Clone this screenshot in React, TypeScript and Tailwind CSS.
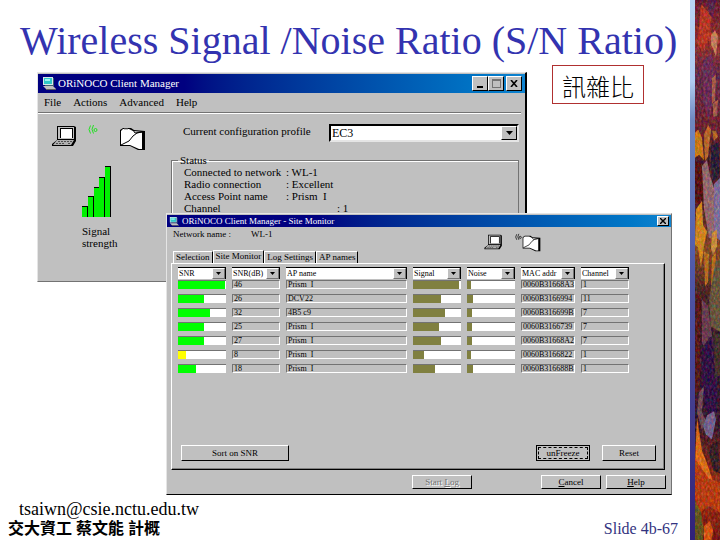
import type { ReactNode } from "react";
import clsx from "clsx";

const MENU_ITEMS = ["File", "Actions", "Advanced", "Help"];

const STATUS_ROWS = [
  { label: "Connected to network", value: "WL-1" },
  { label: "Radio connection", value: "Excellent" },
  { label: "Access Point name", value: "Prism  I" },
];

const TABS = ["Selection", "Site Monitor", "Log Settings", "AP names"];

const COLUMNS = [
  { id: "snr", title: "SNR", className: "w-12" },
  { id: "snrDb", title: "SNR(dB)", className: "w-12" },
  { id: "apName", title: "AP name", className: "" },
  { id: "signal", title: "Signal", className: "w-12" },
  { id: "noise", title: "Noise", className: "w-12" },
  { id: "mac", title: "MAC addr", className: "w-[54px]" },
  { id: "channel", title: "Channel", className: "w-12" },
];

const STATIONS = [
  { snr: 98, db: "46", name: "Prism  I", signal: 96, noise: 8, mac: "0060B31668A3", channel: "1" },
  { snr: 54, db: "26", name: "DCV22", signal: 58, noise: 12, mac: "0060B3166994", channel: "11" },
  { snr: 67, db: "32", name: "4B5 c9", signal: 67, noise: 10, mac: "0060B316699B", channel: "7" },
  { snr: 54, db: "25", name: "Prism  I", signal: 54, noise: 10, mac: "0060B3166739", channel: "7" },
  { snr: 54, db: "27", name: "Prism  I", signal: 58, noise: 10, mac: "0060B31668A2", channel: "7" },
  { snr: 16, db: "8", name: "Prism  I", signal: 22, noise: 8, mac: "0060B3166822", channel: "1" },
  { snr: 37, db: "18", name: "Prism  I", signal: 46, noise: 12, mac: "0060B316688B", channel: "1" },
];

function ComputerIcon({ className }: { className: string }) {
  return (
    <svg viewBox="0 0 14 13" className={className} aria-hidden="true">
      <path d="M1 0h10v8H1z" fill="#d8e8e8" />
      <path d="M2 1h8v6H2z" fill="#30c8c8" />
      <path d="M3 2h5v2H3z" fill="#a0f0f0" />
      <path d="M11 1h1v8H3V8h8z" fill="#406070" />
      <path d="M1 9h10l3 3H4z" fill="#c0c0c0" />
      <path d="M4 12h10v1H4z" fill="#606060" />
    </svg>
  );
}

function LaptopIcon({ className }: { className: string }) {
  return (
    <svg viewBox="0 0 25 22" className={className} aria-hidden="true">
      <path d="M5 1h17l2 1v14l-3 5H0v-2l5-4z" fill="#000" />
      <path d="M6 2h16v12H6z" fill="#c0c0c0" />
      <path d="M8 3h13v10H8z" fill="#000" />
      <path d="M9 4h11v9H9z" fill="#fff" />
      <path d="M5 15h17l-3 5H1z" fill="#b0b0b0" />
      <path d="M6 16.500h14M4 18.500h9M16 18.500h2" stroke="#505050" strokeDasharray="2 1" />
    </svg>
  );
}

function WavesIcon({ className }: { className: string }) {
  return (
    <svg viewBox="0 0 10 9" className={className} fill="none" stroke="currentColor" aria-hidden="true">
      <path d="M2.500.5q-3 4 0 8M5.500 0q-3 4.500 0 8.500" />
      <circle cx="7.500" cy="5" r="1.500" />
    </svg>
  );
}

function FolderIcon({ className }: { className: string }) {
  return (
    <svg viewBox="0 0 25 24" className={className} aria-hidden="true">
      <path d="M0 3l3-2h8l3 2 11 1v19h-7l-8-4H0z" fill="#000" />
      <path d="M1 4l2-2h6l4 2 9 1v17h-3l-9-4H1z" fill="#fff" />
      <path d="M1 18l8-4 4-5 4-3 5-1M13 3l2 3 7-1" fill="none" stroke="#000" />
      <path d="M4 2h4" stroke="#808080" />
    </svg>
  );
}

function Arrow() {
  return (
    <svg viewBox="0 0 5 3" className="h-[3px] w-[5px]" aria-hidden="true">
      <path d="M0 0h5L2.500 3z" fill="#000" />
    </svg>
  );
}

function SignalBars() {
  const heights = [10, 20, 29, 39, 50];
  return (
    <svg viewBox="0 0 29 51" className="h-[51px] w-[29px]" aria-label="Signal strength" shapeRendering="crispEdges">
      {heights.map((h, i) => (
        <g key={h}>
          <rect x={i * 6 - (i > 2 ? 1 : 0)} y={50 - h} width={6} height={h + 1} fill="#000" />
          <rect x={i * 6 - (i > 2 ? 1 : 0)} y={51 - h} width={5} height={h} fill="#00f000" />
        </g>
      ))}
    </svg>
  );
}

function CaptionButton({ label, children }: { label: string; children: ReactNode }) {
  return (
    <button
      type="button"
      aria-label={label}
      className="flex h-[15px] w-4 items-center justify-center border border-t-white border-l-white border-r-black border-b-black bg-[#c0c0c0]"
    >
      {children}
    </button>
  );
}

function PushButton({ className, children }: { className: string; children: ReactNode }) {
  return (
    <button
      type="button"
      className={clsx(
        "border border-t-white border-l-white border-r-black border-b-black text-[9px] leading-none",
        className,
      )}
    >
      {children}
    </button>
  );
}

function HeaderSelect({ title }: { title: string }) {
  return (
    <div className="relative h-3">
      <select
        aria-label={title}
        className="block h-3 w-full appearance-none rounded-none border-t border-r border-black bg-white pr-3 pl-px text-[8px] leading-[11px]"
      >
        <option>{title}</option>
      </select>
      <span className="pointer-events-none absolute top-px right-px flex h-[11px] w-[13px] items-center justify-center border border-t-white border-l-white border-r-neutral-500 border-b-neutral-500 bg-[#c0c0c0]">
        <Arrow />
      </span>
    </div>
  );
}

function Meter({ value, color }: { value: number; color: string }) {
  return (
    <div className="h-[9px] border-t border-neutral-500 bg-white">
      <div className={clsx("h-2", color)} style={{ width: `${value}%` }} />
    </div>
  );
}

function Field({ children }: { children: ReactNode }) {
  return (
    <div className="h-[9px] border border-t-neutral-500 border-l-neutral-500 border-r-white border-b-white pl-px text-[8px] leading-[8px] whitespace-pre">
      {children}
    </div>
  );
}

function ClientManager() {
  return (
    <div className="absolute top-[7px] right-[163px] left-[37px] h-[210px] border-t border-r-2 border-b border-l border-t-neutral-200 border-r-black border-b-neutral-500 border-l-neutral-200 bg-[#c0c0c0]">
      <div className="mt-px flex h-[19px] items-center bg-gradient-to-r from-[#000080] from-30% to-[#1084d0] pr-[3px] pl-1">
        <ComputerIcon className="h-[13px] w-[14px]" />
        <span className="ml-[2px] flex-1 text-[11px] text-white">ORiNOCO Client Manager</span>
        <div className="flex">
          <CaptionButton label="Minimize">
            <span className="mt-[7px] h-[2px] w-[6px] bg-black" />
          </CaptionButton>
          <CaptionButton label="Maximize">
            <span className="size-[9px] border border-t-2 border-neutral-500" />
          </CaptionButton>
          <span className="w-[2px]" />
          <CaptionButton label="Close">
            <svg viewBox="0 0 8 7" className="h-[7px] w-2" stroke="#000" strokeWidth="1.600">
              <path d="M1 0l6 7M7 0L1 7" />
            </svg>
          </CaptionButton>
        </div>
      </div>

      <nav className="mr-1 flex h-5 items-center gap-3 border-b border-neutral-500 pl-[6px] text-[11px] leading-none">
        {MENU_ITEMS.map((item) => (
          <button key={item} type="button">{item}</button>
        ))}
      </nav>

      <div className="mr-1 flex border-t border-white">
        <div className="w-[133px] pt-[11px] pl-[14px]">
          <div className="flex items-start">
            <LaptopIcon className="h-[22px] w-[25px]" />
            <WavesIcon className="ml-[11px] h-[9px] w-[10px] text-[#20e020]" />
            <FolderIcon className="mt-[2px] ml-[22px] h-6 w-[25px]" />
          </div>
          <div className="mt-[15px] pl-[30px]">
            <SignalBars />
            <p className="mt-2 text-[11px] leading-3">
              Signal
              <br />
              strength
            </p>
          </div>
        </div>

        <div className="flex-1 pt-[10px] pr-[2px]">
          <div className="flex items-center pl-3">
            <label htmlFor="profile" className="-mt-1 w-[146px] text-[11px] leading-[14px]">
              Current configuration profile
            </label>
            <div className="relative h-[18px] flex-1">
              <select
                id="profile"
                className="block h-[18px] w-full appearance-none rounded-none border-2 border-t-black border-l-black border-r-neutral-200 border-b-neutral-200 bg-white pl-px text-[12px] leading-[14px]"
              >
                <option>EC3</option>
              </select>
              <span className="pointer-events-none absolute top-[2px] right-[2px] flex h-[14px] w-4 items-center justify-center border border-t-white border-l-white border-r-black border-b-black bg-[#c0c0c0]">
                <svg viewBox="0 0 7 4" className="h-1 w-[7px]"><path d="M0 0h7L3.500 4z" /></svg>
              </span>
            </div>
          </div>

          <fieldset className="mt-3 h-[110px] border border-neutral-500 px-3 text-[11px] leading-3 shadow-[inset_1px_1px_0_#fff]">
            <legend className="-ml-[6px] px-[2px]">Status</legend>
            {STATUS_ROWS.map((row) => (
              <div key={row.label} className="flex whitespace-pre">
                <span className="w-[102px]">{row.label}</span>
                <span>: {row.value}</span>
              </div>
            ))}
            <div className="flex">
              <span className="w-[153px]">Channel</span>
              <span>: 1</span>
            </div>
          </fieldset>
        </div>
      </div>
    </div>
  );
}

function SiteMonitor() {
  return (
    <div className="relative mt-[148px] mr-[18px] ml-[166px] border border-t-neutral-200 border-l-neutral-200 border-r-neutral-500 border-b-black bg-[#c0c0c0]">
      <div className="mt-px flex h-3 items-center bg-gradient-to-r from-[#000080] from-30% to-[#1084d0] px-[2px]">
        <ComputerIcon className="h-[9px] w-[10px]" />
        <span className="ml-[3px] flex-1 text-[9px] leading-none text-white">ORiNOCO Client Manager - Site Monitor</span>
        <button
          type="button"
          aria-label="Close"
          className="flex h-[10px] w-3 items-center justify-center border border-t-white border-l-white border-r-black border-b-black bg-[#c0c0c0]"
        >
          <svg viewBox="0 0 6 6" className="size-[6px]" stroke="#000" strokeWidth="1.400">
            <path d="M0 0l6 6M6 0L0 6" />
          </svg>
        </button>
      </div>

      <div className="flex h-[23px] items-start pl-[6px] text-[9px] leading-3">
        <span className="mt-px w-[78px]">Network name :</span>
        <span className="mt-px flex-1">WL-1</span>
        <LaptopIcon className="mt-[7px] h-4 w-[19px]" />
        <WavesIcon className="mt-[6px] ml-3 h-2 w-[7px]" />
        <FolderIcon className="mt-2 mr-[130px] h-[17px] w-[19px]" />
      </div>

      <div role="tablist" className="flex h-[13px] items-end pl-[6px] text-[9px] leading-none">
        {TABS.map((tab, i) => (
          <button
            key={tab}
            type="button"
            role="tab"
            aria-selected={i === 1}
            className={clsx(
              "border-t border-r border-l border-t-white border-r-black border-l-white bg-[#c0c0c0] px-[2px] whitespace-nowrap",
              i === 1 ? "h-[13px] pb-px" : "h-3",
            )}
          >
            {tab}
          </button>
        ))}
      </div>

      <div className="mr-[6px] ml-1 border border-t-white border-l-white border-r-black border-b-black pt-[3px] shadow-[inset_-1px_-1px_0_#808080]">
        <div className="pr-[29px]">
          <table className="w-full table-fixed border-separate border-spacing-x-[6px] border-spacing-y-0">
            <thead>
              <tr>
                {COLUMNS.map((col) => (
                  <th key={col.id} className={clsx("h-[13px] p-0 text-left align-top font-normal", col.className)}>
                    <HeaderSelect title={col.title} />
                  </th>
                ))}
              </tr>
            </thead>
            <tbody className="[&_td]:h-[14px] [&_td]:p-0 [&_td]:align-top">
              {STATIONS.map((s) => (
                <tr key={s.mac}>
                  <td><Meter value={s.snr} color={s.snr < 20 ? "bg-[#ffff00]" : "bg-[#00ff00]"} /></td>
                  <td><Field>{s.db}</Field></td>
                  <td><Field>{s.name}</Field></td>
                  <td><Meter value={s.signal} color="bg-[#808040]" /></td>
                  <td><Meter value={s.noise} color="bg-[#808040]" /></td>
                  <td><Field>{s.mac}</Field></td>
                  <td><Field>{s.channel}</Field></td>
                </tr>
              ))}
            </tbody>
          </table>
        </div>
        <div className="mt-[67px] mb-2 flex items-center gap-3 pr-2 pl-[9px]">
          <PushButton className="h-4 w-[108px]">Sort on SNR</PushButton>
          <span className="flex-1" />
          <button
            type="button"
            className="h-4 w-[54px] border border-black p-px text-[9px] leading-none"
          >
            <span className="flex h-full items-center justify-center border border-dashed border-black">
              unFreeze
            </span>
          </button>
          <PushButton className="h-4 w-[54px]">Reset</PushButton>
        </div>
      </div>

      <div className="mt-[5px] mb-[5px] flex justify-end gap-[5px] pr-[5px]">
        <PushButton className="mr-16 h-[14px] w-[60px] text-neutral-500 [text-shadow:1px_1px_0_#fff]">
          Start <u>L</u>og
        </PushButton>
        <PushButton className="h-[14px] w-[60px]"><u>C</u>ancel</PushButton>
        <PushButton className="h-[14px] w-[60px]"><u>H</u>elp</PushButton>
      </div>
    </div>
  );
}

function PaintedEdge() {
  return (
    <svg viewBox="0 0 30 540" preserveAspectRatio="none" className="size-full" aria-hidden="true">
      <defs>
        <linearGradient id="sky" x1="0" y1="0" x2="0" y2="1">
          <stop offset="0" stopColor="#b8d4f4" />
          <stop offset=".15" stopColor="#b0ccf0" />
          <stop offset=".22" stopColor="#7088c0" />
          <stop offset=".5" stopColor="#5058a8" />
          <stop offset=".8" stopColor="#403888" />
          <stop offset="1" stopColor="#302078" />
        </linearGradient>
        <linearGradient id="ground" x1="0" y1="0" x2="0" y2="1">
          <stop offset="0" stopColor="#681830" />
          <stop offset=".08" stopColor="#a03028" />
          <stop offset=".14" stopColor="#602850" />
          <stop offset=".23" stopColor="#702030" />
          <stop offset=".3" stopColor="#401820" />
          <stop offset=".38" stopColor="#502028" />
          <stop offset=".46" stopColor="#905020" />
          <stop offset=".54" stopColor="#402020" />
          <stop offset=".65" stopColor="#281030" />
          <stop offset=".78" stopColor="#281028" />
          <stop offset=".9" stopColor="#b03008" />
          <stop offset="1" stopColor="#781008" />
        </linearGradient>
        <filter id="grain" x="0" y="0" width="100%" height="100%" colorInterpolationFilters="sRGB">
          <feTurbulence type="fractalNoise" baseFrequency=".5 .3" numOctaves="3" seed="8" />
          <feColorMatrix values="2 0 0 0 -.6  0 1.600 0 0 -.6  0 0 1.600 0 -.6  0 0 0 0 .26" />
        </filter>
      </defs>
      <path d="M0 0h6v540H0z" fill="url(#sky)" />
      <path d="M5 0h25v540H5z" fill="url(#ground)" />
      <path d="M11 4l5 6 6 4-2 15 4 10-6 2-6 10-5-8 2-15z" fill="#d03820" />
      <path d="M17 0h9l-3 18-4-4z" fill="#582050" />
      <path d="M21 35l4-5 3 6-2 21-3-9-2-3z" fill="#e09868" />
      <path d="M13 60l9-6 3 30-6 35-6-18z" fill="#6c2c60" />
      <path d="M22 78l4-4-1 26-3 3zM23 103l5-4-1 16-4 1z" fill="#b86850" />
      <path d="M5 132l3-3 4 8 2 22-5-5-4 3z" fill="#e89010" />
      <path d="M14 134l4-10 3 5-3 27-3 4zM22 130l4 0 2 6-4 4z" fill="#d07828" />
      <path d="M21 145l8-4v34l-6 5-2-15z" fill="#181838" />
      <path d="M5 160l6 2 3 20-1 15-4 7-4-5z" fill="#500808" />
      <path d="M12 165l5-6 3 15 4 13 2 48-7 2-5-30z" fill="#a07880" />
      <path d="M24 183l6-6v62l-6-4z" fill="#8880b8" />
      <path d="M6 208l6-8 1 24 4 6-3 14-3 22-3-20-3-2z" fill="#f0a018" />
      <path d="M22 232l5-4v17l-4 9-2-7z" fill="#e8a840" />
      <path d="M14 250l5 3-1 28-3 4zM22 256l4-5-1 30-4 3z" fill="#d08018" />
      <path d="M25 262l5-5v73l-9-5-2-27z" fill="#686040" />
      <path d="M12 298l6 6 4 29-4 14-6-5z" fill="#684058" />
      <path d="M13 345l7-10 7 3v74l-8 4-7-25z" fill="#200848" />
      <path d="M23 330l7 3v40l-5 4z" fill="#383028" />
      <path d="M6 292l5 4-1 89-5 10z" fill="#501010" />
      <path d="M9 390l5-6-2 26 4 9-4 9-5-18z" fill="#705060" />
      <path d="M17 413l7-4 2 8-4 20-6-5-3-8z" fill="#7870a8" />
      <path d="M22 442l6-3 2 32-7-3-4-18z" fill="#281820" />
      <path d="M7 415l5 33 5 13 6 18-12-5-6-12z" fill="#ff8010" />
      <path d="M5 456l6 9 8 11 11 4v30l-12-7-8 8-5-7z" fill="#d04008" />
      <path d="M5 497l6 13 3 18-2 12H5z" fill="#606018" />
      <path d="M14 523l6-5 3 10-2 12h-7z" fill="#f86008" />
      <path d="M5 0h25v540H5z" filter="url(#grain)" />
    </svg>
  );
}

export default function App() {
  return (
    <div className="flex min-h-screen bg-white font-['Liberation_Serif','Noto_Sans_CJK_TC',serif] text-black">
      <main className="flex min-w-0 flex-1 flex-col">
        <h1 className="h-[65px] pt-[18px] pl-5 text-[40px] leading-[46px] whitespace-nowrap text-[#3333b0]">
          Wireless Signal /Noise Ratio (S/N Ratio)
        </h1>

        {/* Desktop with the two overlapping windows */}
        <section className="relative">
          <ClientManager />
          <SiteMonitor />
          <p className="absolute top-0 right-[46px] border border-[#b03030] px-[9px] pt-[3px] font-['Noto_Sans_CJK_TC',sans-serif] text-[24px] leading-[34px] font-light">
            訊雜比
          </p>
        </section>

        <footer className="flex items-end justify-between pt-1 pr-3 pb-1 pl-2">
          <div className="leading-5">
            <p className="pl-[11px] text-[18px] leading-5">tsaiwn@csie.nctu.edu.tw</p>
            <p className="text-[16px] font-bold">交大資工 蔡文能 計概</p>
          </div>
          <p className="text-[16px] leading-5 text-[#333380]">Slide 4b-67</p>
        </footer>
      </main>

      <aside className="relative w-[30px]">
        <div className="absolute inset-0">
          <PaintedEdge />
        </div>
      </aside>
    </div>
  );
}
